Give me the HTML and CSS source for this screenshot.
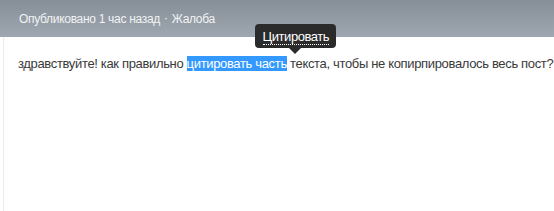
FILE: index.html
```html
<!DOCTYPE html>
<html lang="ru">
<head>
    <meta charset="UTF-8">
    <title>Пост</title>
    <link rel="stylesheet" href="styles.css">
</head>
<body>
    <div class="post-header">
        <span>Опубликовано 1 час назад</span><span class="sep">·</span><span>Жалоба</span>
    </div>
    <div class="post-body">
        <p class="post-text">здравствуйте! как правильно <span class="selected">цитировать часть<span class="quote-tip"><span class="quote-link">Цитировать</span></span></span> текста, чтобы не копирпировалось весь пост?</p>
    </div>
</body>
</html>
```

FILE: styles.css
```css
body {
    margin: 0;
    font-family: "Liberation Sans", Arial, sans-serif;
    background-color: #fff;
    overflow: hidden;
}

.post-header {
    height: 37px;
    display: flex;
    align-items: center;
    padding-left: 19px;
    font-size: 12px;
    letter-spacing: -0.3px;
    color: #f2f3f4;
    background: linear-gradient(#868e98, #9fa7b0);
}

.sep {
    padding: 0 4px;
    position: relative;
    top: -1px;
}

.post-body {
    margin-left: 3px;
    border-left: 1px solid #ececec;
    height: 174px;
    padding: 1px 0 0 14px;
}

.post-text {
    margin: 18px 0 0 0;
    font-size: 13px;
    line-height: 15px;
    letter-spacing: -0.34px;
    color: #3a3a3a;
    white-space: nowrap;
}

.selected {
    position: relative;
    background-color: #3399ff;
    color: #fff;
}

.quote-tip {
    position: absolute;
    left: 68px;
    top: -32px;
    padding: 5px 7px 4px 8px;
    background-color: #2b2b2b;
    border-radius: 4px;
    color: #fff;
    font-size: 13px;
    line-height: 15px;
    letter-spacing: -0.45px;
}

.quote-tip::after {
    content: "";
    position: absolute;
    left: 34px;
    bottom: -6px;
    border-left: 6px solid transparent;
    border-right: 6px solid transparent;
    border-top: 6px solid #2b2b2b;
}

.quote-link {
    border-bottom: 1px dotted #fff;
}
```
